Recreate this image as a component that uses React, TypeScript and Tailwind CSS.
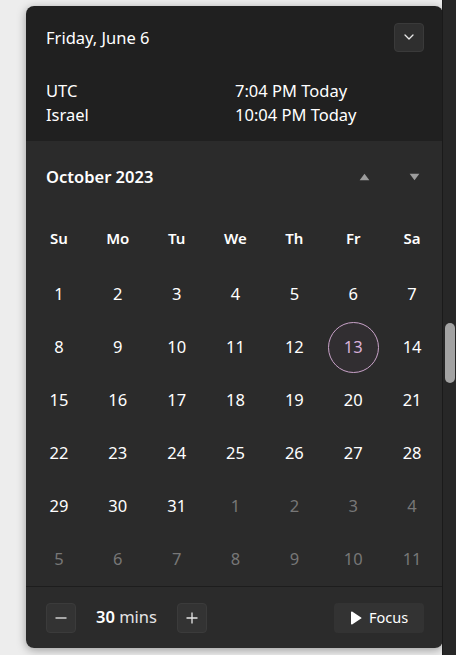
const weekdays = ["Su", "Mo", "Tu", "We", "Th", "Fr", "Sa"];

type Day = { n: number; muted?: boolean };

const days: Day[] = [
  ...Array.from({ length: 31 }, (_, i) => ({ n: i + 1 })),
  ...Array.from({ length: 11 }, (_, i) => ({ n: i + 1, muted: true })),
];

const rows: Day[][] = Array.from({ length: 6 }, (_, r) => days.slice(r * 7, r * 7 + 7));

export default function App() {
  return (
    <div
      className="relative flex w-[456px] h-[655px] overflow-hidden bg-[#ededed] text-white"
      style={{ fontFamily: '"Noto Sans", "Open Sans", sans-serif' }}
    >
      <div className="w-[26px] shrink-0" />

      {/* flyout */}
      <div className="mt-[6px] flex h-[642px] w-[417px] shrink-0 flex-col overflow-hidden rounded-lg shadow-[0_2px_10px_rgba(0,0,0,0.35)]">
        {/* header */}
        <div className="h-[135px] shrink-0 bg-[#202020] pl-5 pr-[19px]">
          <div className="flex items-center justify-between pt-4">
            <span className="mt-[1px] text-[16.5px] leading-[29px]">Friday, June 6</span>
            <button className="flex h-[29px] w-[30px] items-center justify-center rounded border border-[#3a3a3a] bg-[#2f2f2f]">
              <svg width="10" height="6" viewBox="0 0 10 6" fill="none">
                <path d="M1 1l4 4 4-4" stroke="#e8e8e8" strokeWidth="1.3" strokeLinecap="round" strokeLinejoin="round" />
              </svg>
            </button>
          </div>
          <div className="mt-[27px] grid grid-cols-[189px_1fr] text-[16.5px] leading-6">
            <span>UTC</span>
            <span>7:04 PM Today</span>
            <span>Israel</span>
            <span>10:04 PM Today</span>
          </div>
        </div>

        {/* calendar */}
        <div className="h-[445px] shrink-0 bg-[#2b2b2b]">
          <div className="flex h-[72px] items-center pl-5 pr-[17px]">
            <span className="flex-1 text-[16.5px] font-semibold">October 2023</span>
            <button className="flex h-6 w-6 items-center justify-center">
              <svg width="11" height="8" viewBox="0 0 11 8">
                <path d="M5.5 0.8L10.4 7.2H0.6Z" fill="#9c9c9c" />
              </svg>
            </button>
            <button className="ml-[26px] flex h-6 w-6 items-center justify-center">
              <svg width="11" height="8" viewBox="0 0 11 8">
                <path d="M0.6 0.8H10.4L5.5 7.2Z" fill="#9c9c9c" />
              </svg>
            </button>
          </div>

          <div className="grid h-[51px] grid-cols-7 pl-[3.5px] pr-[1.5px]">
            {weekdays.map((w) => (
              <div key={w} className="flex items-center justify-center text-[15px] font-semibold">
                {w}
              </div>
            ))}
          </div>

          <div className="mt-[4px] pl-[3.5px] pr-[1.5px]">
            {rows.map((row, r) => (
              <div key={r} className="grid h-[53px] grid-cols-7">
                {row.map((d, i) => {
                  const selected = !d.muted && d.n === 13;
                  return (
                    <div key={i} className="flex items-center justify-center">
                      {selected ? (
                        <div className="flex h-[51px] w-[51px] items-center justify-center rounded-full border border-[#c9a3c9] bg-[#312e31] text-[16.5px] text-[#d9b0d9]">
                          {d.n}
                        </div>
                      ) : (
                        <span className={d.muted ? "text-[16.5px] text-[#777777]" : "text-[16.5px] text-white"}>
                          {d.n}
                        </span>
                      )}
                    </div>
                  );
                })}
              </div>
            ))}
          </div>
        </div>

        {/* footer */}
        <div className="flex flex-1 items-center border-t border-[#1d1d1d] bg-[#2b2b2b] pl-5 pr-[19px]">
          <button className="flex h-[30px] w-[30px] items-center justify-center rounded border border-[#3b3b3b] bg-[#333333]">
            <svg width="12" height="12" viewBox="0 0 12 12">
              <path d="M0.5 6h11" stroke="#cfcfcf" strokeWidth="1.3" />
            </svg>
          </button>
          <span className="ml-5 w-[81px] text-[16.5px]">
            <span className="font-semibold">30</span> <span className="text-[#e6e6e6]">mins</span>
          </span>
          <button className="flex h-[30px] w-[30px] items-center justify-center rounded border border-[#3b3b3b] bg-[#333333]">
            <svg width="12" height="12" viewBox="0 0 12 12">
              <path d="M0.5 6h11M6 0.5v11" stroke="#e6e6e6" strokeWidth="1.3" />
            </svg>
          </button>
          <div className="flex-1" />
          <button className="flex h-[30px] w-[90px] items-center justify-center gap-[7px] rounded bg-[#333333] text-[14.5px]">
            <svg width="12" height="14" viewBox="0 0 12 14">
              <path d="M1 1.2v11.6c0 .6.6.9 1.1.6l9-5.8c.5-.3.5-.9 0-1.2l-9-5.8C1.6.3 1 .6 1 1.2z" fill="#ffffff" />
            </svg>
            <span>Focus</span>
          </button>
        </div>
      </div>

      {/* scrollbar strip */}
      <div className="relative ml-[-1px] w-[14px] shrink-0 border-l border-[#1a1a1a] bg-[#272727]">
        <div className="absolute left-[2px] top-[323px] h-[60px] w-[10px] rounded-full bg-[#a3a3a3]" />
      </div>
    </div>
  );
}
